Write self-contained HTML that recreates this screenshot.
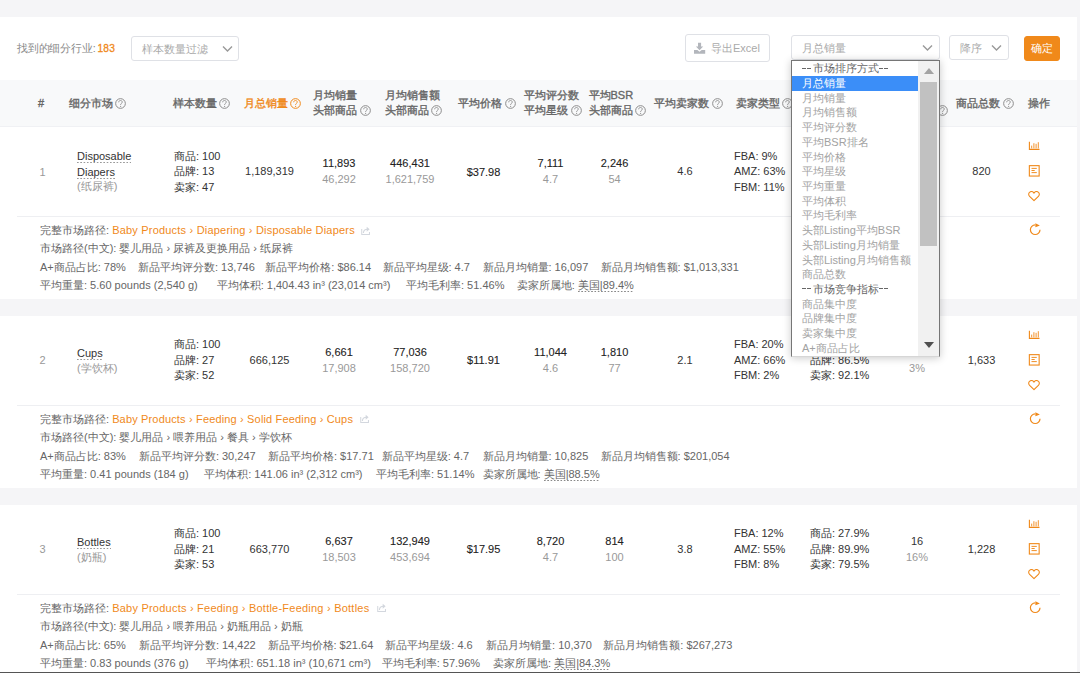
<!DOCTYPE html>
<html><head><meta charset="utf-8"><style>
html,body{margin:0;padding:0;}
body{width:1080px;height:673px;overflow:hidden;position:relative;background:#f5f5f7;font-family:"Liberation Sans",sans-serif;}
.card{position:absolute;left:0;top:17px;width:1077px;height:656px;background:#fff;}
.t{position:absolute;white-space:nowrap;line-height:16px;}
.c{text-align:center;}
.ic{position:absolute;}
.box{position:absolute;box-sizing:border-box;border:1px solid #dfe1e6;border-radius:3px;background:#fff;}
.q{display:inline-block;vertical-align:-2px;margin-left:-0.5px;}
.u{padding-bottom:1px;background:linear-gradient(to right,#9a9a9a 60%,transparent 60%) repeat-x left bottom/3.3px 1px;}
.u2{padding-bottom:1px;background:linear-gradient(to right,#8a8a8a 60%,transparent 60%) repeat-x left bottom/3.3px 1px;}
.lb{position:absolute;left:791px;top:60px;width:149px;height:297px;box-sizing:border-box;border:1px solid #767676;border-bottom:1px solid #d6d6d6;background:#fff;overflow:hidden;box-shadow:0 1px 8px rgba(0,0,0,0.22);}
.opt{position:absolute;left:0;width:126px;height:14.7px;line-height:14.7px;padding-left:10px;box-sizing:border-box;font-size:11px;white-space:nowrap;}
.dsh{display:inline-block;width:4px;height:1px;background:currentColor;margin-right:1.3px;vertical-align:3.5px;}
.sb{position:absolute;left:126px;top:0;width:21px;height:296px;background:#f1f1f1;}
.thumb{position:absolute;left:128px;top:21px;width:17px;height:164px;background:#c1c1c1;}
</style></head><body>
<div class="card"></div>
<div class="t" style="left:17px;top:40.0px;font-size:11px;color:#888;font-weight:normal;transform:scaleX(0.983);transform-origin:0 0;">找到的细分行业:</div><div class="t" style="left:97.6px;top:40.6px;font-size:10.2px;color:#f0891a;font-weight:normal;-webkit-text-stroke:0.3px #f0891a;letter-spacing:0.1px">183</div><div class="box" style="left:131px;top:36px;width:108px;height:25px"></div><div class="t" style="left:142px;top:40.6px;font-size:11px;color:#aaa;font-weight:normal;">样本数量过滤</div><svg class="ic" style="left:222px;top:44.5px" width="11" height="8" viewBox="0 0 11 8"><path d="M1 1.5 L5.5 6 L10 1.5" fill="none" stroke="#999" stroke-width="1.4"/></svg><div class="box" style="left:685px;top:34px;width:85px;height:28px"></div><svg class="ic" style="left:694px;top:42px" width="12" height="12" viewBox="0 0 12 12"><path d="M4 0.7 H7.1 V4.6 H9.2 L5.55 8.2 L1.9 4.6 H4 Z" fill="#b3b6bc"/><path d="M0 8 H3.4 L5.55 9.8 L7.7 8 H11.2 V11.7 H0 Z" fill="#b3b6bc"/></svg><div class="t" style="left:711px;top:40.0px;font-size:11px;color:#aaa;font-weight:normal;">导出Excel</div><div class="box" style="left:791px;top:35px;width:149px;height:25px"></div><div class="t" style="left:802px;top:40.2px;font-size:11px;color:#aaa;font-weight:normal;">月总销量</div><svg class="ic" style="left:922px;top:43.5px" width="11" height="8" viewBox="0 0 11 8"><path d="M1 1.5 L5.5 6 L10 1.5" fill="none" stroke="#999" stroke-width="1.4"/></svg><div class="box" style="left:949px;top:35px;width:60px;height:25px"></div><div class="t" style="left:960px;top:39.5px;font-size:11px;color:#aaa;font-weight:normal;">降序</div><svg class="ic" style="left:991px;top:43.5px" width="11" height="8" viewBox="0 0 11 8"><path d="M1 1.5 L5.5 6 L10 1.5" fill="none" stroke="#999" stroke-width="1.4"/></svg><div class="box" style="left:1024px;top:36px;width:36px;height:25px;background:#f0891a;border-color:#f0891a"></div><div class="t c" style="left:1024.0px;width:36px;top:40.0px;font-size:11px;color:#fff;font-weight:normal;">确定</div><div style="position:absolute;left:0;top:80px;width:1077px;height:46px;background:#f8f9fa;border-bottom:1px solid #f0f1f4"></div><div class="t" style="left:38px;top:94.5px;font-size:11px;color:#666;font-weight:normal;-webkit-text-stroke:0.35px currentColor;">#</div><div class="t" style="left:68.5px;top:94.5px;font-size:11px;color:#666;font-weight:normal;-webkit-text-stroke:0.35px currentColor;">细分市场 <svg class="q" width="11" height="11" viewBox="0 0 11 11"><circle cx="5.5" cy="5.5" r="4.85" fill="none" stroke="#8c8c8c" stroke-width="1"/><path d="M3.7 4.3 C3.7 3.1 4.5 2.5 5.5 2.5 C6.5 2.5 7.3 3.2 7.3 4.1 C7.3 5.3 5.6 5.4 5.6 6.7 V7.1" fill="none" stroke="#8c8c8c" stroke-width="0.9"/><circle cx="5.6" cy="8.5" r="0.6" fill="#8c8c8c"/></svg></div><div class="t" style="left:172.5px;top:94.5px;font-size:11px;color:#666;font-weight:normal;-webkit-text-stroke:0.35px currentColor;">样本数量 <svg class="q" width="11" height="11" viewBox="0 0 11 11"><circle cx="5.5" cy="5.5" r="4.85" fill="none" stroke="#8c8c8c" stroke-width="1"/><path d="M3.7 4.3 C3.7 3.1 4.5 2.5 5.5 2.5 C6.5 2.5 7.3 3.2 7.3 4.1 C7.3 5.3 5.6 5.4 5.6 6.7 V7.1" fill="none" stroke="#8c8c8c" stroke-width="0.9"/><circle cx="5.6" cy="8.5" r="0.6" fill="#8c8c8c"/></svg></div><div class="t" style="left:243.5px;top:94.5px;font-size:11px;color:#f0891a;font-weight:normal;-webkit-text-stroke:0.35px currentColor;">月总销量 <svg class="q" width="11" height="11" viewBox="0 0 11 11"><circle cx="5.5" cy="5.5" r="4.85" fill="none" stroke="#f0891a" stroke-width="1"/><path d="M3.7 4.3 C3.7 3.1 4.5 2.5 5.5 2.5 C6.5 2.5 7.3 3.2 7.3 4.1 C7.3 5.3 5.6 5.4 5.6 6.7 V7.1" fill="none" stroke="#f0891a" stroke-width="0.9"/><circle cx="5.6" cy="8.5" r="0.6" fill="#f0891a"/></svg></div><div class="t" style="left:313px;top:86.5px;font-size:11px;color:#666;font-weight:normal;-webkit-text-stroke:0.35px currentColor;">月均销量</div><div class="t" style="left:313px;top:102.0px;font-size:11px;color:#666;font-weight:normal;-webkit-text-stroke:0.35px currentColor;">头部商品 <svg class="q" width="11" height="11" viewBox="0 0 11 11"><circle cx="5.5" cy="5.5" r="4.85" fill="none" stroke="#8c8c8c" stroke-width="1"/><path d="M3.7 4.3 C3.7 3.1 4.5 2.5 5.5 2.5 C6.5 2.5 7.3 3.2 7.3 4.1 C7.3 5.3 5.6 5.4 5.6 6.7 V7.1" fill="none" stroke="#8c8c8c" stroke-width="0.9"/><circle cx="5.6" cy="8.5" r="0.6" fill="#8c8c8c"/></svg></div><div class="t" style="left:384.5px;top:86.5px;font-size:11px;color:#666;font-weight:normal;-webkit-text-stroke:0.35px currentColor;">月均销售额</div><div class="t" style="left:384.5px;top:102.0px;font-size:11px;color:#666;font-weight:normal;-webkit-text-stroke:0.35px currentColor;">头部商品 <svg class="q" width="11" height="11" viewBox="0 0 11 11"><circle cx="5.5" cy="5.5" r="4.85" fill="none" stroke="#8c8c8c" stroke-width="1"/><path d="M3.7 4.3 C3.7 3.1 4.5 2.5 5.5 2.5 C6.5 2.5 7.3 3.2 7.3 4.1 C7.3 5.3 5.6 5.4 5.6 6.7 V7.1" fill="none" stroke="#8c8c8c" stroke-width="0.9"/><circle cx="5.6" cy="8.5" r="0.6" fill="#8c8c8c"/></svg></div><div class="t" style="left:458px;top:94.5px;font-size:11px;color:#666;font-weight:normal;-webkit-text-stroke:0.35px currentColor;">平均价格 <svg class="q" width="11" height="11" viewBox="0 0 11 11"><circle cx="5.5" cy="5.5" r="4.85" fill="none" stroke="#8c8c8c" stroke-width="1"/><path d="M3.7 4.3 C3.7 3.1 4.5 2.5 5.5 2.5 C6.5 2.5 7.3 3.2 7.3 4.1 C7.3 5.3 5.6 5.4 5.6 6.7 V7.1" fill="none" stroke="#8c8c8c" stroke-width="0.9"/><circle cx="5.6" cy="8.5" r="0.6" fill="#8c8c8c"/></svg></div><div class="t" style="left:524px;top:86.5px;font-size:11px;color:#666;font-weight:normal;-webkit-text-stroke:0.35px currentColor;">平均评分数</div><div class="t" style="left:524px;top:102.0px;font-size:11px;color:#666;font-weight:normal;-webkit-text-stroke:0.35px currentColor;">平均星级 <svg class="q" width="11" height="11" viewBox="0 0 11 11"><circle cx="5.5" cy="5.5" r="4.85" fill="none" stroke="#8c8c8c" stroke-width="1"/><path d="M3.7 4.3 C3.7 3.1 4.5 2.5 5.5 2.5 C6.5 2.5 7.3 3.2 7.3 4.1 C7.3 5.3 5.6 5.4 5.6 6.7 V7.1" fill="none" stroke="#8c8c8c" stroke-width="0.9"/><circle cx="5.6" cy="8.5" r="0.6" fill="#8c8c8c"/></svg></div><div class="t" style="left:588.5px;top:86.5px;font-size:11px;color:#666;font-weight:normal;-webkit-text-stroke:0.35px currentColor;">平均BSR</div><div class="t" style="left:588.5px;top:102.0px;font-size:11px;color:#666;font-weight:normal;-webkit-text-stroke:0.35px currentColor;">头部商品 <svg class="q" width="11" height="11" viewBox="0 0 11 11"><circle cx="5.5" cy="5.5" r="4.85" fill="none" stroke="#8c8c8c" stroke-width="1"/><path d="M3.7 4.3 C3.7 3.1 4.5 2.5 5.5 2.5 C6.5 2.5 7.3 3.2 7.3 4.1 C7.3 5.3 5.6 5.4 5.6 6.7 V7.1" fill="none" stroke="#8c8c8c" stroke-width="0.9"/><circle cx="5.6" cy="8.5" r="0.6" fill="#8c8c8c"/></svg></div><div class="t" style="left:654px;top:94.5px;font-size:11px;color:#666;font-weight:normal;-webkit-text-stroke:0.35px currentColor;">平均卖家数 <svg class="q" width="11" height="11" viewBox="0 0 11 11"><circle cx="5.5" cy="5.5" r="4.85" fill="none" stroke="#8c8c8c" stroke-width="1"/><path d="M3.7 4.3 C3.7 3.1 4.5 2.5 5.5 2.5 C6.5 2.5 7.3 3.2 7.3 4.1 C7.3 5.3 5.6 5.4 5.6 6.7 V7.1" fill="none" stroke="#8c8c8c" stroke-width="0.9"/><circle cx="5.6" cy="8.5" r="0.6" fill="#8c8c8c"/></svg></div><div class="t" style="left:735.5px;top:94.5px;font-size:11px;color:#666;font-weight:normal;-webkit-text-stroke:0.35px currentColor;">卖家类型 <svg class="q" width="11" height="11" viewBox="0 0 11 11"><circle cx="5.5" cy="5.5" r="4.85" fill="none" stroke="#8c8c8c" stroke-width="1"/><path d="M3.7 4.3 C3.7 3.1 4.5 2.5 5.5 2.5 C6.5 2.5 7.3 3.2 7.3 4.1 C7.3 5.3 5.6 5.4 5.6 6.7 V7.1" fill="none" stroke="#8c8c8c" stroke-width="0.9"/><circle cx="5.6" cy="8.5" r="0.6" fill="#8c8c8c"/></svg></div><div class="t" style="left:810px;top:86.5px;font-size:11px;color:#666;font-weight:normal;-webkit-text-stroke:0.35px currentColor;">市场集中度</div><div class="t" style="left:810px;top:102.0px;font-size:11px;color:#666;font-weight:normal;-webkit-text-stroke:0.35px currentColor;">头部商品 <svg class="q" width="11" height="11" viewBox="0 0 11 11"><circle cx="5.5" cy="5.5" r="4.85" fill="none" stroke="#8c8c8c" stroke-width="1"/><path d="M3.7 4.3 C3.7 3.1 4.5 2.5 5.5 2.5 C6.5 2.5 7.3 3.2 7.3 4.1 C7.3 5.3 5.6 5.4 5.6 6.7 V7.1" fill="none" stroke="#8c8c8c" stroke-width="0.9"/><circle cx="5.6" cy="8.5" r="0.6" fill="#8c8c8c"/></svg></div><div class="t" style="left:885px;top:86.5px;font-size:11px;color:#666;font-weight:normal;-webkit-text-stroke:0.35px currentColor;">新品数量</div><div class="t" style="left:880px;top:102.0px;font-size:11px;color:#666;font-weight:normal;-webkit-text-stroke:0.35px currentColor;">新品占比</div><div style="position:absolute;left:936.8px;top:104.9px;line-height:0"><svg style="display:block" width="11" height="11" viewBox="0 0 11 11"><circle cx="5.5" cy="5.5" r="4.85" fill="none" stroke="#8c8c8c" stroke-width="1"/><path d="M3.7 4.3 C3.7 3.1 4.5 2.5 5.5 2.5 C6.5 2.5 7.3 3.2 7.3 4.1 C7.3 5.3 5.6 5.4 5.6 6.7 V7.1" fill="none" stroke="#8c8c8c" stroke-width="0.9"/><circle cx="5.6" cy="8.5" r="0.6" fill="#8c8c8c"/></svg></div><div class="t" style="left:956px;top:94.5px;font-size:11px;color:#666;font-weight:normal;-webkit-text-stroke:0.35px currentColor;">商品总数 <svg class="q" width="11" height="11" viewBox="0 0 11 11"><circle cx="5.5" cy="5.5" r="4.85" fill="none" stroke="#8c8c8c" stroke-width="1"/><path d="M3.7 4.3 C3.7 3.1 4.5 2.5 5.5 2.5 C6.5 2.5 7.3 3.2 7.3 4.1 C7.3 5.3 5.6 5.4 5.6 6.7 V7.1" fill="none" stroke="#8c8c8c" stroke-width="0.9"/><circle cx="5.6" cy="8.5" r="0.6" fill="#8c8c8c"/></svg></div><div class="t" style="left:1028px;top:94.5px;font-size:11px;color:#666;font-weight:normal;-webkit-text-stroke:0.35px currentColor;">操作</div><div style="position:absolute;left:0;top:298.5px;width:1080px;height:17.100000000000023px;background:#f5f5f7"></div><div style="position:absolute;left:0;top:487.8px;width:1080px;height:16.899999999999977px;background:#f5f5f7"></div><div class="t" style="left:39.5px;top:163.5px;font-size:11px;color:#999;font-weight:normal;">1</div><div class="t" style="left:77px;top:148.0px;font-size:11px;color:#333;font-weight:normal;"><span class="u">Disposable</span></div><div class="t" style="left:77px;top:164.0px;font-size:11px;color:#333;font-weight:normal;"><span class="u">Diapers</span></div><div class="t" style="left:77px;top:178.0px;font-size:11px;color:#999;font-weight:normal;">(纸尿裤)</div><div class="t" style="left:174px;top:147.5px;font-size:11px;color:#333;font-weight:normal;">商品: 100</div><div class="t" style="left:174px;top:163.0px;font-size:11px;color:#333;font-weight:normal;">品牌: 13</div><div class="t" style="left:174px;top:178.5px;font-size:11px;color:#333;font-weight:normal;">卖家: 47</div><div class="t c" style="left:209.5px;width:120px;top:163.0px;font-size:11px;color:#333;font-weight:normal;">1,189,319</div><div class="t c" style="left:279.0px;width:120px;top:155.0px;font-size:11px;color:#222;font-weight:normal;-webkit-text-stroke:0.1px #222;">11,893</div><div class="t c" style="left:279.0px;width:120px;top:171.0px;font-size:11px;color:#999;font-weight:normal;">46,292</div><div class="t c" style="left:350.0px;width:120px;top:155.0px;font-size:11px;color:#222;font-weight:normal;-webkit-text-stroke:0.1px #222;">446,431</div><div class="t c" style="left:350.0px;width:120px;top:171.0px;font-size:11px;color:#999;font-weight:normal;">1,621,759</div><div class="t c" style="left:423.5px;width:120px;top:163.5px;font-size:11px;color:#222;font-weight:normal;-webkit-text-stroke:0.1px #222;">$37.98</div><div class="t c" style="left:490.5px;width:120px;top:155.0px;font-size:11px;color:#222;font-weight:normal;-webkit-text-stroke:0.1px #222;">7,111</div><div class="t c" style="left:490.5px;width:120px;top:171.0px;font-size:11px;color:#999;font-weight:normal;">4.7</div><div class="t c" style="left:554.5px;width:120px;top:155.0px;font-size:11px;color:#222;font-weight:normal;-webkit-text-stroke:0.1px #222;">2,246</div><div class="t c" style="left:554.5px;width:120px;top:171.0px;font-size:11px;color:#999;font-weight:normal;">54</div><div class="t c" style="left:625.0px;width:120px;top:163.0px;font-size:11px;color:#333;font-weight:normal;">4.6</div><div class="t" style="left:734px;top:147.5px;font-size:11px;color:#333;font-weight:normal;">FBA: 9%</div><div class="t" style="left:734px;top:163.0px;font-size:11px;color:#333;font-weight:normal;">AMZ: 63%</div><div class="t" style="left:734px;top:178.5px;font-size:11px;color:#333;font-weight:normal;">FBM: 11%</div><div class="t" style="left:810px;top:147.5px;font-size:11px;color:#333;font-weight:normal;">商品: 31.6%</div><div class="t" style="left:810px;top:163.0px;font-size:11px;color:#333;font-weight:normal;">品牌: 86.5%</div><div class="t" style="left:810px;top:178.5px;font-size:11px;color:#333;font-weight:normal;">卖家: 92.1%</div><div class="t c" style="left:857.0px;width:120px;top:155.5px;font-size:11px;color:#333;font-weight:normal;">16</div><div class="t c" style="left:857.0px;width:120px;top:171.0px;font-size:11px;color:#999;font-weight:normal;">2%</div><div class="t c" style="left:921.5px;width:120px;top:163.0px;font-size:11px;color:#333;font-weight:normal;">820</div><svg class="ic" style="left:1028px;top:141px" width="12" height="10" viewBox="0 0 12 10"><path d="M1.4 0.8 V8.4 H11.5" fill="none" stroke="#f0891a" stroke-width="1.1"/><path d="M3.7 7.4 V4.6 M5.9 7.4 V2.2 M8.1 7.4 V2.8 M10.3 7.4 V1.2" stroke="#f0891a" stroke-width="0.9"/></svg><svg class="ic" style="left:1028px;top:164px" width="12" height="13" viewBox="0 0 12 13"><rect x="1.35" y="1.65" width="9.8" height="10.4" fill="none" stroke="#f0891a" stroke-width="1.1"/><path d="M3.5 4.4 H8.8 M3.5 6.5 H6.7 M3.5 8.6 H8.8" stroke="#f0891a" stroke-width="0.95"/></svg><svg class="ic" style="left:1028px;top:190.8px" width="12" height="11" viewBox="0 0 12 11"><path d="M6 9.6 L1.6 5.3 C0.3 4 0.4 2 1.8 1.1 C3.2 0.2 5 0.7 6 2.1 C7 0.7 8.8 0.2 10.2 1.1 C11.6 2 11.7 4 10.4 5.3 Z" fill="none" stroke="#f0891a" stroke-width="1.1" stroke-linejoin="round"/></svg><div style="position:absolute;left:17px;top:216px;width:1043px;height:1px;background:#eeeff2"></div><div class="t" style="left:40px;top:222.0px;font-size:11px;color:#666;font-weight:normal;">完整市场路径: <span style="color:#f0891a;letter-spacing:0.2px">Baby Products › Diapering › Disposable Diapers</span></div><svg class="ic" style="left:361px;top:225.6px" width="9.2" height="9.2" viewBox="0 0 10 10"><path d="M0.8 3.2 V9.2 H9.2 V6.6" fill="none" stroke="#d3d7de" stroke-width="1.1"/><path d="M2.6 7.6 C2.8 5 4.4 3.6 7 3.6" fill="none" stroke="#d3d7de" stroke-width="1.2"/><path d="M6.2 0.9 L9.4 3.6 L6.2 6.3 Z" fill="#d3d7de"/></svg><div class="t" style="left:40px;top:240.0px;font-size:11px;color:#666;font-weight:normal;">市场路径(中文): 婴儿用品 › 尿裤及更换用品 › 纸尿裤</div><div class="t" style="left:40px;top:259.0px;font-size:11px;color:#666;font-weight:normal;">A+商品占比: 78%</div><div class="t" style="left:138px;top:259.0px;font-size:11px;color:#666;font-weight:normal;">新品平均评分数: 13,746</div><div class="t" style="left:265.3px;top:259.0px;font-size:11px;color:#666;font-weight:normal;">新品平均价格: $86.14</div><div class="t" style="left:382.5px;top:259.0px;font-size:11px;color:#666;font-weight:normal;">新品平均星级: 4.7</div><div class="t" style="left:482.5px;top:259.0px;font-size:11px;color:#666;font-weight:normal;">新品月均销量: 16,097</div><div class="t" style="left:600.6px;top:259.0px;font-size:11px;color:#666;font-weight:normal;">新品月均销售额: $1,013,331</div><div class="t" style="left:40px;top:277.0px;font-size:11px;color:#666;font-weight:normal;">平均重量: 5.60 pounds (2,540 g)</div><div class="t" style="left:216.7px;top:277.0px;font-size:11px;color:#666;font-weight:normal;">平均体积: 1,404.43 in³ (23,014 cm³)</div><div class="t" style="left:406px;top:277.0px;font-size:11px;color:#666;font-weight:normal;">平均毛利率: 51.46%</div><div class="t" style="left:516.7px;top:277.0px;font-size:11px;color:#666;font-weight:normal;">卖家所属地: <span class="u2">美国|89.4%</span></div><svg class="ic" style="left:1028.5px;top:222.8px" width="13" height="13" viewBox="0 0 13 13"><path d="M6.2 1.9 A4.8 4.8 0 1 0 11 6.7" fill="none" stroke="#f0891a" stroke-width="1.2"/><path d="M6.4 0.2 L10.9 2.4 L6.4 4.3 Z" fill="#f0891a"/></svg><div class="t" style="left:39.5px;top:352.3px;font-size:11px;color:#999;font-weight:normal;">2</div><div class="t" style="left:77px;top:344.8px;font-size:11px;color:#333;font-weight:normal;"><span class="u">Cups</span></div><div class="t" style="left:77px;top:359.8px;font-size:11px;color:#999;font-weight:normal;">(学饮杯)</div><div class="t" style="left:174px;top:336.3px;font-size:11px;color:#333;font-weight:normal;">商品: 100</div><div class="t" style="left:174px;top:351.8px;font-size:11px;color:#333;font-weight:normal;">品牌: 27</div><div class="t" style="left:174px;top:367.3px;font-size:11px;color:#333;font-weight:normal;">卖家: 52</div><div class="t c" style="left:209.5px;width:120px;top:351.8px;font-size:11px;color:#333;font-weight:normal;">666,125</div><div class="t c" style="left:279.0px;width:120px;top:343.8px;font-size:11px;color:#222;font-weight:normal;-webkit-text-stroke:0.1px #222;">6,661</div><div class="t c" style="left:279.0px;width:120px;top:359.8px;font-size:11px;color:#999;font-weight:normal;">17,908</div><div class="t c" style="left:350.0px;width:120px;top:343.8px;font-size:11px;color:#222;font-weight:normal;-webkit-text-stroke:0.1px #222;">77,036</div><div class="t c" style="left:350.0px;width:120px;top:359.8px;font-size:11px;color:#999;font-weight:normal;">158,720</div><div class="t c" style="left:423.5px;width:120px;top:352.3px;font-size:11px;color:#222;font-weight:normal;-webkit-text-stroke:0.1px #222;">$11.91</div><div class="t c" style="left:490.5px;width:120px;top:343.8px;font-size:11px;color:#222;font-weight:normal;-webkit-text-stroke:0.1px #222;">11,044</div><div class="t c" style="left:490.5px;width:120px;top:359.8px;font-size:11px;color:#999;font-weight:normal;">4.6</div><div class="t c" style="left:554.5px;width:120px;top:343.8px;font-size:11px;color:#222;font-weight:normal;-webkit-text-stroke:0.1px #222;">1,810</div><div class="t c" style="left:554.5px;width:120px;top:359.8px;font-size:11px;color:#999;font-weight:normal;">77</div><div class="t c" style="left:625.0px;width:120px;top:351.8px;font-size:11px;color:#333;font-weight:normal;">2.1</div><div class="t" style="left:734px;top:336.3px;font-size:11px;color:#333;font-weight:normal;">FBA: 20%</div><div class="t" style="left:734px;top:351.8px;font-size:11px;color:#333;font-weight:normal;">AMZ: 66%</div><div class="t" style="left:734px;top:367.3px;font-size:11px;color:#333;font-weight:normal;">FBM: 2%</div><div class="t" style="left:810px;top:336.3px;font-size:11px;color:#333;font-weight:normal;">商品: 24.3%</div><div class="t" style="left:810px;top:351.8px;font-size:11px;color:#333;font-weight:normal;">品牌: 86.5%</div><div class="t" style="left:810px;top:367.3px;font-size:11px;color:#333;font-weight:normal;">卖家: 92.1%</div><div class="t c" style="left:857.0px;width:120px;top:344.3px;font-size:11px;color:#333;font-weight:normal;">5</div><div class="t c" style="left:857.0px;width:120px;top:359.8px;font-size:11px;color:#999;font-weight:normal;">3%</div><div class="t c" style="left:921.5px;width:120px;top:351.8px;font-size:11px;color:#333;font-weight:normal;">1,633</div><svg class="ic" style="left:1028px;top:329.8px" width="12" height="10" viewBox="0 0 12 10"><path d="M1.4 0.8 V8.4 H11.5" fill="none" stroke="#f0891a" stroke-width="1.1"/><path d="M3.7 7.4 V4.6 M5.9 7.4 V2.2 M8.1 7.4 V2.8 M10.3 7.4 V1.2" stroke="#f0891a" stroke-width="0.9"/></svg><svg class="ic" style="left:1028px;top:352.8px" width="12" height="13" viewBox="0 0 12 13"><rect x="1.35" y="1.65" width="9.8" height="10.4" fill="none" stroke="#f0891a" stroke-width="1.1"/><path d="M3.5 4.4 H8.8 M3.5 6.5 H6.7 M3.5 8.6 H8.8" stroke="#f0891a" stroke-width="0.95"/></svg><svg class="ic" style="left:1028px;top:379.6px" width="12" height="11" viewBox="0 0 12 11"><path d="M6 9.6 L1.6 5.3 C0.3 4 0.4 2 1.8 1.1 C3.2 0.2 5 0.7 6 2.1 C7 0.7 8.8 0.2 10.2 1.1 C11.6 2 11.7 4 10.4 5.3 Z" fill="none" stroke="#f0891a" stroke-width="1.1" stroke-linejoin="round"/></svg><div style="position:absolute;left:17px;top:405px;width:1043px;height:1px;background:#eeeff2"></div><div class="t" style="left:40px;top:410.8px;font-size:11px;color:#666;font-weight:normal;">完整市场路径: <span style="color:#f0891a;letter-spacing:0.16px">Baby Products › Feeding › Solid Feeding › Cups</span></div><svg class="ic" style="left:359.5px;top:414.4px" width="9.2" height="9.2" viewBox="0 0 10 10"><path d="M0.8 3.2 V9.2 H9.2 V6.6" fill="none" stroke="#d3d7de" stroke-width="1.1"/><path d="M2.6 7.6 C2.8 5 4.4 3.6 7 3.6" fill="none" stroke="#d3d7de" stroke-width="1.2"/><path d="M6.2 0.9 L9.4 3.6 L6.2 6.3 Z" fill="#d3d7de"/></svg><div class="t" style="left:40px;top:428.8px;font-size:11px;color:#666;font-weight:normal;">市场路径(中文): 婴儿用品 › 喂养用品 › 餐具 › 学饮杯</div><div class="t" style="left:40px;top:447.8px;font-size:11px;color:#666;font-weight:normal;">A+商品占比: 83%</div><div class="t" style="left:138.9px;top:447.8px;font-size:11px;color:#666;font-weight:normal;">新品平均评分数: 30,247</div><div class="t" style="left:268px;top:447.8px;font-size:11px;color:#666;font-weight:normal;">新品平均价格: $17.71</div><div class="t" style="left:381.7px;top:447.8px;font-size:11px;color:#666;font-weight:normal;">新品平均星级: 4.7</div><div class="t" style="left:482.5px;top:447.8px;font-size:11px;color:#666;font-weight:normal;">新品月均销量: 10,825</div><div class="t" style="left:600.6px;top:447.8px;font-size:11px;color:#666;font-weight:normal;">新品月均销售额: $201,054</div><div class="t" style="left:40px;top:465.8px;font-size:11px;color:#666;font-weight:normal;">平均重量: 0.41 pounds (184 g)</div><div class="t" style="left:204.2px;top:465.8px;font-size:11px;color:#666;font-weight:normal;">平均体积: 141.06 in³ (2,312 cm³)</div><div class="t" style="left:376px;top:465.8px;font-size:11px;color:#666;font-weight:normal;">平均毛利率: 51.14%</div><div class="t" style="left:482.5px;top:465.8px;font-size:11px;color:#666;font-weight:normal;">卖家所属地: <span class="u2">美国|88.5%</span></div><svg class="ic" style="left:1028.5px;top:411.6px" width="13" height="13" viewBox="0 0 13 13"><path d="M6.2 1.9 A4.8 4.8 0 1 0 11 6.7" fill="none" stroke="#f0891a" stroke-width="1.2"/><path d="M6.4 0.2 L10.9 2.4 L6.4 4.3 Z" fill="#f0891a"/></svg><div class="t" style="left:39.5px;top:541.3px;font-size:11px;color:#999;font-weight:normal;">3</div><div class="t" style="left:77px;top:533.8px;font-size:11px;color:#333;font-weight:normal;"><span class="u">Bottles</span></div><div class="t" style="left:77px;top:548.8px;font-size:11px;color:#999;font-weight:normal;">(奶瓶)</div><div class="t" style="left:174px;top:525.3px;font-size:11px;color:#333;font-weight:normal;">商品: 100</div><div class="t" style="left:174px;top:540.8px;font-size:11px;color:#333;font-weight:normal;">品牌: 21</div><div class="t" style="left:174px;top:556.3px;font-size:11px;color:#333;font-weight:normal;">卖家: 53</div><div class="t c" style="left:209.5px;width:120px;top:540.8px;font-size:11px;color:#333;font-weight:normal;">663,770</div><div class="t c" style="left:279.0px;width:120px;top:532.8px;font-size:11px;color:#222;font-weight:normal;-webkit-text-stroke:0.1px #222;">6,637</div><div class="t c" style="left:279.0px;width:120px;top:548.8px;font-size:11px;color:#999;font-weight:normal;">18,503</div><div class="t c" style="left:350.0px;width:120px;top:532.8px;font-size:11px;color:#222;font-weight:normal;-webkit-text-stroke:0.1px #222;">132,949</div><div class="t c" style="left:350.0px;width:120px;top:548.8px;font-size:11px;color:#999;font-weight:normal;">453,694</div><div class="t c" style="left:423.5px;width:120px;top:541.3px;font-size:11px;color:#222;font-weight:normal;-webkit-text-stroke:0.1px #222;">$17.95</div><div class="t c" style="left:490.5px;width:120px;top:532.8px;font-size:11px;color:#222;font-weight:normal;-webkit-text-stroke:0.1px #222;">8,720</div><div class="t c" style="left:490.5px;width:120px;top:548.8px;font-size:11px;color:#999;font-weight:normal;">4.7</div><div class="t c" style="left:554.5px;width:120px;top:532.8px;font-size:11px;color:#222;font-weight:normal;-webkit-text-stroke:0.1px #222;">814</div><div class="t c" style="left:554.5px;width:120px;top:548.8px;font-size:11px;color:#999;font-weight:normal;">100</div><div class="t c" style="left:625.0px;width:120px;top:540.8px;font-size:11px;color:#333;font-weight:normal;">3.8</div><div class="t" style="left:734px;top:525.3px;font-size:11px;color:#333;font-weight:normal;">FBA: 12%</div><div class="t" style="left:734px;top:540.8px;font-size:11px;color:#333;font-weight:normal;">AMZ: 55%</div><div class="t" style="left:734px;top:556.3px;font-size:11px;color:#333;font-weight:normal;">FBM: 8%</div><div class="t" style="left:810px;top:525.3px;font-size:11px;color:#333;font-weight:normal;">商品: 27.9%</div><div class="t" style="left:810px;top:540.8px;font-size:11px;color:#333;font-weight:normal;">品牌: 89.9%</div><div class="t" style="left:810px;top:556.3px;font-size:11px;color:#333;font-weight:normal;">卖家: 79.5%</div><div class="t c" style="left:857.0px;width:120px;top:533.3px;font-size:11px;color:#333;font-weight:normal;">16</div><div class="t c" style="left:857.0px;width:120px;top:548.8px;font-size:11px;color:#999;font-weight:normal;">16%</div><div class="t c" style="left:921.5px;width:120px;top:540.8px;font-size:11px;color:#333;font-weight:normal;">1,228</div><svg class="ic" style="left:1028px;top:518.8px" width="12" height="10" viewBox="0 0 12 10"><path d="M1.4 0.8 V8.4 H11.5" fill="none" stroke="#f0891a" stroke-width="1.1"/><path d="M3.7 7.4 V4.6 M5.9 7.4 V2.2 M8.1 7.4 V2.8 M10.3 7.4 V1.2" stroke="#f0891a" stroke-width="0.9"/></svg><svg class="ic" style="left:1028px;top:541.8px" width="12" height="13" viewBox="0 0 12 13"><rect x="1.35" y="1.65" width="9.8" height="10.4" fill="none" stroke="#f0891a" stroke-width="1.1"/><path d="M3.5 4.4 H8.8 M3.5 6.5 H6.7 M3.5 8.6 H8.8" stroke="#f0891a" stroke-width="0.95"/></svg><svg class="ic" style="left:1028px;top:568.6px" width="12" height="11" viewBox="0 0 12 11"><path d="M6 9.6 L1.6 5.3 C0.3 4 0.4 2 1.8 1.1 C3.2 0.2 5 0.7 6 2.1 C7 0.7 8.8 0.2 10.2 1.1 C11.6 2 11.7 4 10.4 5.3 Z" fill="none" stroke="#f0891a" stroke-width="1.1" stroke-linejoin="round"/></svg><div style="position:absolute;left:17px;top:594px;width:1043px;height:1px;background:#eeeff2"></div><div class="t" style="left:40px;top:599.8px;font-size:11px;color:#666;font-weight:normal;">完整市场路径: <span style="color:#f0891a;letter-spacing:0.23px">Baby Products › Feeding › Bottle-Feeding › Bottles</span></div><svg class="ic" style="left:376.7px;top:603.4px" width="9.2" height="9.2" viewBox="0 0 10 10"><path d="M0.8 3.2 V9.2 H9.2 V6.6" fill="none" stroke="#d3d7de" stroke-width="1.1"/><path d="M2.6 7.6 C2.8 5 4.4 3.6 7 3.6" fill="none" stroke="#d3d7de" stroke-width="1.2"/><path d="M6.2 0.9 L9.4 3.6 L6.2 6.3 Z" fill="#d3d7de"/></svg><div class="t" style="left:40px;top:617.8px;font-size:11px;color:#666;font-weight:normal;">市场路径(中文): 婴儿用品 › 喂养用品 › 奶瓶用品 › 奶瓶</div><div class="t" style="left:40px;top:636.8px;font-size:11px;color:#666;font-weight:normal;">A+商品占比: 65%</div><div class="t" style="left:138.9px;top:636.8px;font-size:11px;color:#666;font-weight:normal;">新品平均评分数: 14,422</div><div class="t" style="left:267.5px;top:636.8px;font-size:11px;color:#666;font-weight:normal;">新品平均价格: $21.64</div><div class="t" style="left:385.3px;top:636.8px;font-size:11px;color:#666;font-weight:normal;">新品平均星级: 4.6</div><div class="t" style="left:486.1px;top:636.8px;font-size:11px;color:#666;font-weight:normal;">新品月均销量: 10,370</div><div class="t" style="left:603.3px;top:636.8px;font-size:11px;color:#666;font-weight:normal;">新品月均销售额: $267,273</div><div class="t" style="left:40px;top:654.8px;font-size:11px;color:#666;font-weight:normal;">平均重量: 0.83 pounds (376 g)</div><div class="t" style="left:206.4px;top:654.8px;font-size:11px;color:#666;font-weight:normal;">平均体积: 651.18 in³ (10,671 cm³)</div><div class="t" style="left:381.7px;top:654.8px;font-size:11px;color:#666;font-weight:normal;">平均毛利率: 57.96%</div><div class="t" style="left:493px;top:654.8px;font-size:11px;color:#666;font-weight:normal;">卖家所属地: <span class="u2">美国|84.3%</span></div><svg class="ic" style="left:1028.5px;top:600.6px" width="13" height="13" viewBox="0 0 13 13"><path d="M6.2 1.9 A4.8 4.8 0 1 0 11 6.7" fill="none" stroke="#f0891a" stroke-width="1.2"/><path d="M6.4 0.2 L10.9 2.4 L6.4 4.3 Z" fill="#f0891a"/></svg><div style="position:absolute;left:0;top:672px;width:1080px;height:1px;background:#555"></div><div class="lb"><div class="opt" style="top:0.30px;color:#666"><span class="dsh"></span><span class="dsh"></span>市场排序方式<span class="dsh"></span><span class="dsh"></span></div><div class="opt" style="top:15.01px;background:#3b8ef8;color:#fff">月总销量</div><div class="opt" style="top:29.72px;color:#a2a2a2">月均销量</div><div class="opt" style="top:44.43px;color:#a2a2a2">月均销售额</div><div class="opt" style="top:59.14px;color:#a2a2a2">平均评分数</div><div class="opt" style="top:73.85px;color:#a2a2a2">平均BSR排名</div><div class="opt" style="top:88.56px;color:#a2a2a2">平均价格</div><div class="opt" style="top:103.27px;color:#a2a2a2">平均星级</div><div class="opt" style="top:117.98px;color:#a2a2a2">平均重量</div><div class="opt" style="top:132.69px;color:#a2a2a2">平均体积</div><div class="opt" style="top:147.40px;color:#a2a2a2">平均毛利率</div><div class="opt" style="top:162.11px;color:#a2a2a2">头部Listing平均BSR</div><div class="opt" style="top:176.82px;color:#a2a2a2">头部Listing月均销量</div><div class="opt" style="top:191.53px;color:#a2a2a2">头部Listing月均销售额</div><div class="opt" style="top:206.24px;color:#a2a2a2">商品总数</div><div class="opt" style="top:220.95px;color:#666"><span class="dsh"></span><span class="dsh"></span>市场竞争指标<span class="dsh"></span><span class="dsh"></span></div><div class="opt" style="top:235.66px;color:#a2a2a2">商品集中度</div><div class="opt" style="top:250.37px;color:#a2a2a2">品牌集中度</div><div class="opt" style="top:265.08px;color:#a2a2a2">卖家集中度</div><div class="opt" style="top:279.79px;color:#a2a2a2">A+商品占比</div><div class="sb"></div><div class="thumb"></div><svg style="position:absolute;left:132px;top:7px" width="10" height="6" viewBox="0 0 10 6"><path d="M0 6 L5 0 L10 6Z" fill="#a3a3a3"/></svg><svg style="position:absolute;left:132px;top:281px" width="10" height="6" viewBox="0 0 10 6"><path d="M0 0 L5 6 L10 0Z" fill="#505050"/></svg></div>
</body></html>
